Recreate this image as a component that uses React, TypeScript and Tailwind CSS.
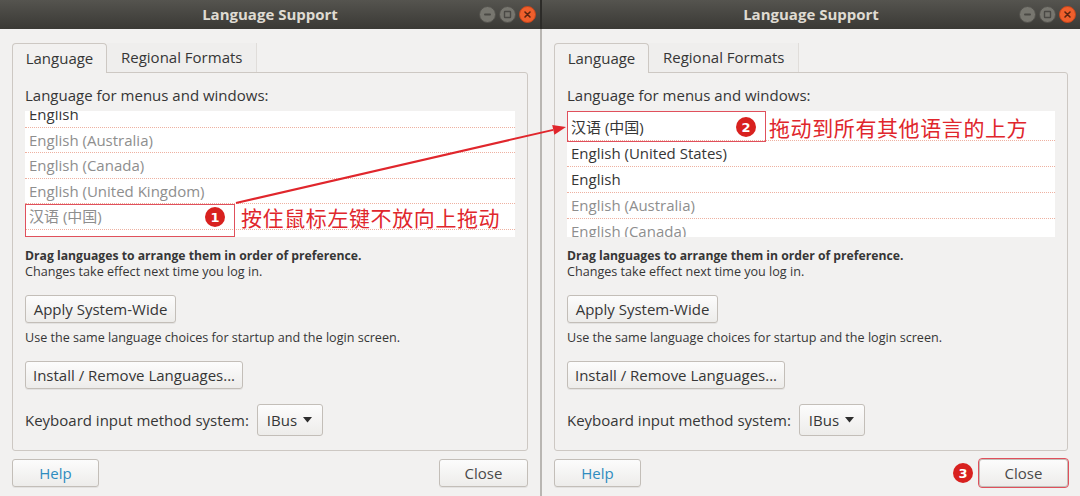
import React from 'react';

type Row = { label: string; dim?: boolean };

const leftRows: Row[] = [
  { label: 'English' },
  { label: 'English (Australia)', dim: true },
  { label: 'English (Canada)', dim: true },
  { label: 'English (United Kingdom)', dim: true },
  { label: '汉语 (中国)', dim: true },
];

const rightRows: Row[] = [
  { label: '汉语 (中国)' },
  { label: 'English (United States)' },
  { label: 'English' },
  { label: 'English (Australia)', dim: true },
  { label: 'English (Canada)', dim: true },
];

function Marker({ n, className = '' }: { n: string; className?: string }) {
  return (
    <span
      className={`flex h-[20px] w-[20px] items-center justify-center rounded-full bg-[#d8211f] font-['DejaVu_Sans',sans-serif] text-[13px] font-bold leading-none text-white ${className}`}
    >
      {n}
    </span>
  );
}

function TitleBar() {
  return (
    <div className="grid h-[29px] shrink-0 grid-cols-[1fr_auto_1fr] items-center bg-linear-to-b from-[#55544f] to-[#3a3935]">
      <div />
      <span className="text-[15px] font-bold text-[#dfdbd2]">Language Support</span>
      <div className="flex items-center justify-end gap-[3px] pr-[4px]">
        <svg width="17" height="17" viewBox="0 0 17 17">
          <circle cx="8.5" cy="8.5" r="8" fill="#77766f" stroke="#52514c" strokeWidth="1" />
          <rect x="5" y="7.5" width="7" height="2" rx="1" fill="#4a4945" />
        </svg>
        <svg width="17" height="17" viewBox="0 0 17 17">
          <circle cx="8.5" cy="8.5" r="8" fill="#77766f" stroke="#52514c" strokeWidth="1" />
          <rect x="5.5" y="5.5" width="6" height="6" rx="0.5" fill="none" stroke="#4a4945" strokeWidth="1.4" />
        </svg>
        <svg width="17" height="17" viewBox="0 0 17 17">
          <circle cx="8.5" cy="8.5" r="8" fill="#ef5f2c" stroke="#c7451b" strokeWidth="1" />
          <path d="M6 6 L11 11 M11 6 L6 11" stroke="#5a2410" strokeWidth="1.6" strokeLinecap="round" />
        </svg>
      </div>
    </div>
  );
}

function GtkButton({ children, className = '' }: { children: React.ReactNode; className?: string }) {
  return (
    <div
      className={`flex h-[28px] items-center justify-center rounded-[3px] border border-[#c3beb8] bg-linear-to-b from-[#fcfcfc] to-[#edecea] text-[15px] shadow-[0_1px_0_rgba(0,0,0,0.06)] ${className}`}
    >
      {children}
    </div>
  );
}

function LanguageList({ rows, side }: { rows: Row[]; side: 'left' | 'right' }) {
  const isLeft = side === 'left';
  return (
    <div className="relative mt-[6px] h-[126px] bg-white">
      <div className="h-full overflow-hidden">
        <div className={isLeft ? 'flex flex-col -mt-[9px]' : 'flex flex-col mt-[4px]'}>
          {rows.map((row) => (
            <div
              key={row.label}
              className={`flex shrink-0 items-center border-b border-dotted border-[#eeb1a1] px-[4px] text-[15px] ${
                isLeft ? 'h-[25.5px]' : 'h-[26px]'
              } ${row.dim ? 'text-[#8e8e8e]' : 'text-[#363636]'}`}
            >
              {row.label}
            </div>
          ))}
        </div>
      </div>

      {/* annotations */}
      {isLeft ? (
        <>
          <div className="absolute left-0 top-[93px] h-[33px] w-[210px] border-[1.5px] border-[#e0505c]" />
          <Marker n="1" className="absolute left-[180px] top-[96px]" />
          <span className="absolute left-[216px] top-[93px] h-[26px] font-['Noto_Sans_CJK_SC',sans-serif] text-[21px] leading-[26px] tracking-[0.6px] text-[#e0262c]">
            按住鼠标左键不放向上拖动
          </span>
        </>
      ) : (
        <>
          <div className="absolute left-0 top-0 h-[31px] w-[199px] border-[1.5px] border-[#e0505c]" />
          <Marker n="2" className="absolute left-[169px] top-[6px]" />
          <span className="absolute left-[202px] top-[3px] h-[26px] font-['Noto_Sans_CJK_SC',sans-serif] text-[21px] leading-[26px] tracking-[0.6px] text-[#e0262c]">
            拖动到所有其他语言的上方
          </span>
        </>
      )}
    </div>
  );
}

function LanguageWindow({ side }: { side: 'left' | 'right' }) {
  const isLeft = side === 'left';
  return (
    <div className={`flex h-full flex-col bg-[#f2f1f0] ${isLeft ? 'w-[540px]' : 'w-[538px]'}`}>
      <TitleBar />
      <div className="flex flex-col px-[12px] pt-[14px]">
        {/* tabs */}
        <div className="flex h-[29px] items-stretch">
          <div className="relative z-10 -mb-px flex w-[95px] items-center justify-center rounded-t-[4px] border border-b-0 border-[#cdc8c3] bg-[#f2f1f0] text-[15px]">
            Language
          </div>
          <div className="flex items-center border-r border-[#e0ddda] bg-[#efeeed] px-[14px] text-[15px]">
            Regional Formats
          </div>
        </div>

        {/* panel */}
        <div className="flex h-[379px] flex-col rounded-[3px] rounded-tl-none border border-[#cdc8c3] bg-[#f2f1f0] px-[12px] pt-[12px]">
          <div className="h-[20px] text-[15px] leading-[20px]">Language for menus and windows:</div>
          <LanguageList rows={isLeft ? leftRows : rightRows} side={side} />
          <div className="mt-[11px] text-[12.2px] font-bold leading-[16px]">
            Drag languages to arrange them in order of preference.
          </div>
          <div className="text-[12.6px] leading-[16px]">Changes take effect next time you log in.</div>
          <GtkButton className="mt-[15px] w-[151px]">Apply System-Wide</GtkButton>
          <div className="mt-[7px] text-[12.6px] leading-[16px]">
            Use the same language choices for startup and the login screen.
          </div>
          <GtkButton className="mt-[15px] w-[218px]">Install / Remove Languages...</GtkButton>
          <div className="mt-[15px] flex items-center gap-[8px]">
            <span className="text-[15px]">Keyboard input method system:</span>
            <div className="flex h-[32px] w-[66px] items-center justify-between rounded-[3px] border border-[#c3beb8] bg-linear-to-b from-[#fcfcfc] to-[#edecea] pl-[9px] pr-[10px] text-[15px]">
              <span>IBus</span>
              <svg width="9" height="6" viewBox="0 0 9 6">
                <path d="M0 0 L9 0 L4.5 5.5 Z" fill="#2e2e2e" />
              </svg>
            </div>
          </div>
        </div>

        {/* footer */}
        <div className="mt-[8px] flex items-center justify-between">
          <GtkButton className="w-[87px] text-[#2f8cc0]">Help</GtkButton>
          {isLeft ? (
            <GtkButton className="w-[89px] text-[#4a4a4a]">Close</GtkButton>
          ) : (
            <div className="flex items-center gap-[6px]">
              <Marker n="3" className="h-[19px] w-[19px]" />
              <GtkButton className="w-[89px] text-[#4a4a4a] outline-[1.5px] outline-solid outline-[#e0505c]">
                Close
              </GtkButton>
            </div>
          )}
        </div>
      </div>
    </div>
  );
}

export default function App() {
  return (
    <div className="relative flex h-[496px] w-[1080px] overflow-hidden bg-[#f2f1f0] font-['Open_Sans','Noto_Sans_CJK_SC',sans-serif] text-[#363636]">
      <LanguageWindow side="left" />
      <div className="flex w-[2px] flex-col">
        <div className="h-[29px] bg-[#2c2b28]" />
        <div className="flex-1 bg-[#b9b6b2]" />
      </div>
      <LanguageWindow side="right" />

      {/* drag arrow annotation */}
      <svg className="pointer-events-none absolute inset-0" width="1080" height="496" viewBox="0 0 1080 496">
        <line x1="236" y1="203" x2="553.3" y2="129.9" stroke="#e0262c" strokeWidth="2" />
        <polygon points="566,127 554.4,134.8 552.2,125.1" fill="#e0262c" />
      </svg>
    </div>
  );
}
